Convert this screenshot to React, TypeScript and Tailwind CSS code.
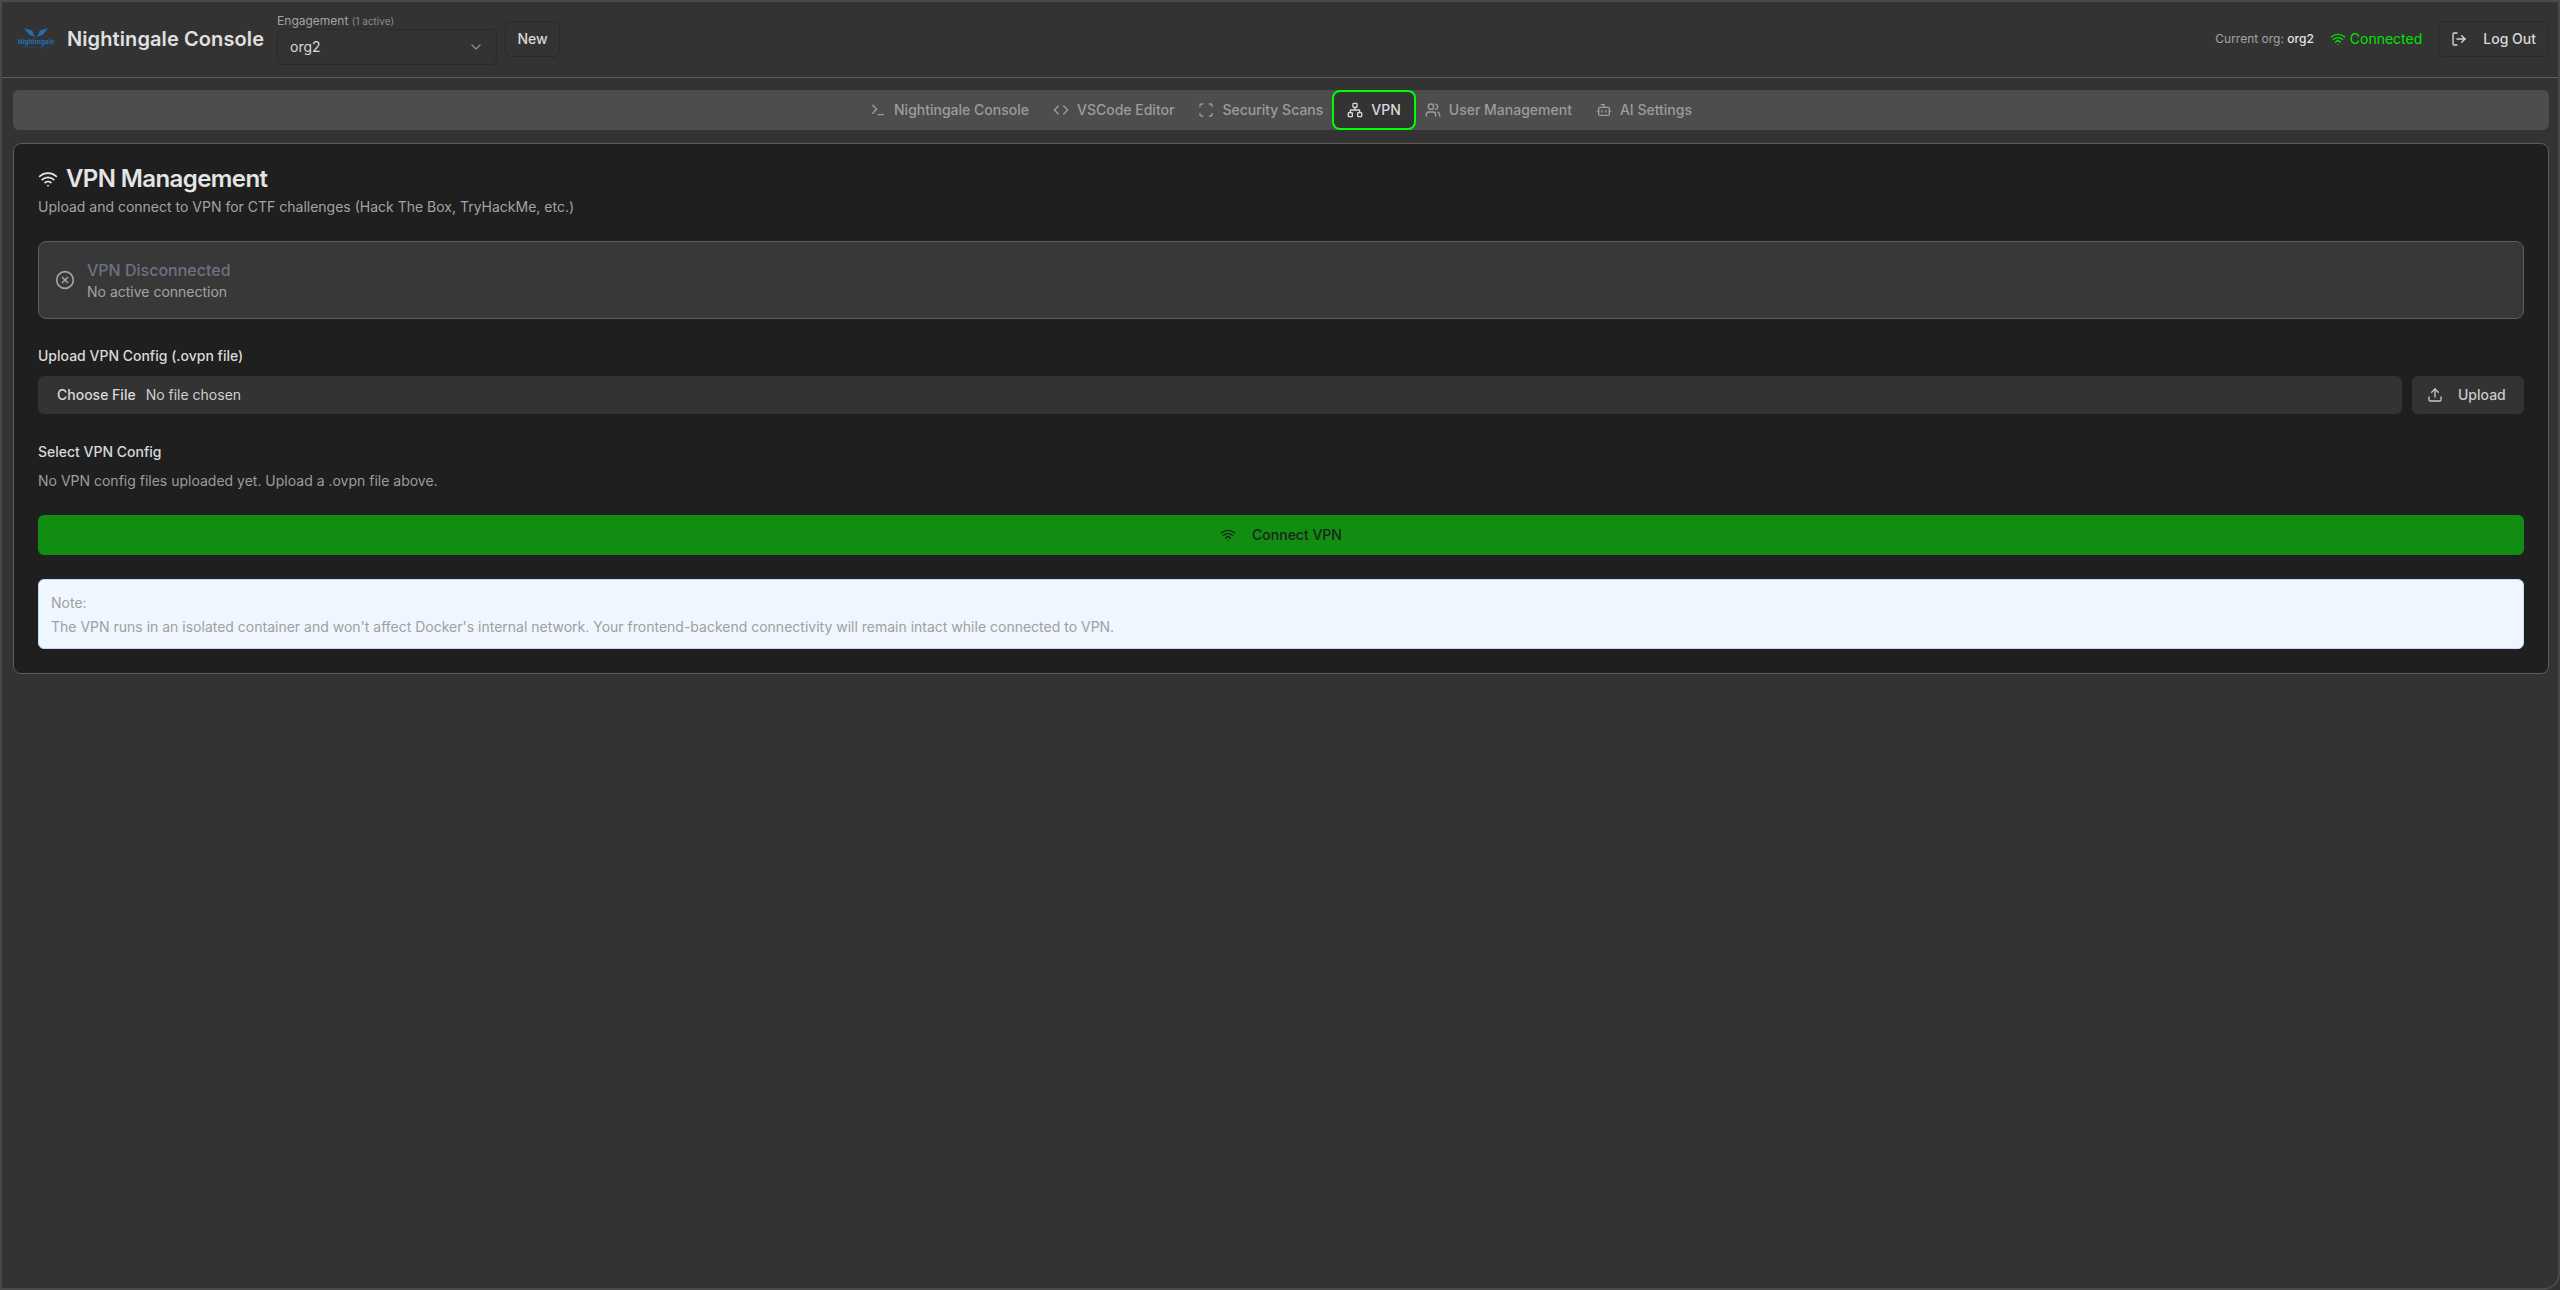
import React from 'react';
import { Terminal, Code, Scan, Network, Users, Bot, ChevronDown, Wifi, LogOut, CircleX, Upload } from 'lucide-react';

const tabs = [
  { label: 'Nightingale Console', icon: Terminal },
  { label: 'VSCode Editor', icon: Code },
  { label: 'Security Scans', icon: Scan },
  { label: 'VPN', icon: Network, active: true },
  { label: 'User Management', icon: Users },
  { label: 'AI Settings', icon: Bot },
];

function Logo() {
  return (
    <div className="flex w-[40px] flex-col items-center">
      <svg width="24" height="9" viewBox="0 0 24 9">
        <path d="M0 0 L8 2.5 L11 9 L5 6.5 Z" fill="#1f6fb5" />
        <path d="M24 0 L16 2.5 L13 9 L19 6.5 Z" fill="#1f6fb5" />
      </svg>
      <span className="mt-[1px] text-[6.5px] font-bold leading-[8px] text-[#1f6fb5]">Nightingale</span>
      <span className="text-[2.5px] leading-[3px] text-[#1f4f7f]">cyber security platform</span>
    </div>
  );
}

export default function App() {
  return (
    <div className="bg-[#333333]">
      <div className="min-h-screen rounded-br-[16px] border-2 border-[#4a4a4a] bg-[#333333] font-['Inter',sans-serif] text-sm text-[#e5e5e5]">
        {/* header */}
        <header className="flex h-[76px] items-center justify-between border-b border-[#5c5c5c] pb-[2px] pl-[14px] pr-[9px]">
          <div className="flex items-center">
            <Logo />
            <h1 className="ml-[11px] text-xl font-semibold tracking-[0.1px] text-[#e0e0e0]">Nightingale Console</h1>
            <div className="ml-[13px] flex flex-col">
              <div className="h-4 text-xs leading-4 text-[#a3a3a3]">
                Engagement <span className="text-[10px] text-[#8a8a8a]">(1 active)</span>
              </div>
              <div className="flex h-9 w-[220px] items-center justify-between rounded-md border border-[#292929] bg-[#333333] px-3 text-[#d9d9d9]">
                org2
                <ChevronDown size={16} className="text-[#8a8a8a]" />
              </div>
            </div>
            <button className="ml-2 h-9 w-[55px] rounded-md border border-[#292929] font-medium text-[#d9d9d9]">New</button>
          </div>
          <div className="flex items-center">
            <span className="text-xs text-[#a3a3a3]">
              Current org: <span className="font-medium text-[#e5e5e5]">org2</span>
            </span>
            <span className="ml-[16px] flex items-center gap-1 text-sm text-[#00e600]">
              <Wifi size={16} className="text-[#00e600]" />
              Connected
            </span>
            <button className="ml-4 flex h-9 items-center gap-4 rounded-md border border-[#292929] px-3 font-medium text-[#d9d9d9]">
              <LogOut size={16} />
              Log Out
            </button>
          </div>
        </header>

        <main className="pl-[11px] pr-[9px] pt-3">
          {/* tabs */}
          <nav className="flex h-10 items-center justify-center rounded-md bg-[#4d4d4d]">
            {tabs.map((t) => (
              <button
                key={t.label}
                className={
                  t.active
                    ? '-mx-px flex h-9 items-center gap-2 rounded-md bg-[#333333] px-[13px] font-medium text-[#d9d9d9] ring-2 ring-[#00ff00]'
                    : 'flex h-9 items-center gap-2 rounded-md px-3 font-medium text-[#9c9c9c]'
                }
              >
                <t.icon size={16} />
                {t.label}
              </button>
            ))}
          </nav>

          {/* vpn panel */}
          <section className="mt-[13px] rounded-lg border border-[#5c5c5c] bg-[#1f1f1f] p-6 pt-[19px]">
            <h2 className="flex h-8 items-center gap-2 text-2xl font-semibold tracking-tight text-[#e5e5e5]">
              <Wifi size={20} />
              VPN Management
            </h2>
            <p className="mt-[2px] h-5 text-sm text-[#a3a3a3]">Upload and connect to VPN for CTF challenges (Hack The Box, TryHackMe, etc.)</p>

            <div className="mt-6 flex h-[78px] items-center gap-3 rounded-lg border border-[#5c5c5c] bg-[#383838] px-4">
              <CircleX size={20} className="text-[#a3a3a3]" />
              <div>
                <div className="text-base font-medium leading-6 text-[#6b7280]">VPN Disconnected</div>
                <div className="text-sm leading-5 text-[#a3a3a3]">No active connection</div>
              </div>
            </div>

            <label className="mt-[27px] block text-sm font-medium leading-5 text-[#d9d9d9]">Upload VPN Config (.ovpn file)</label>
            <div className="mt-[10px] flex gap-[10px]">
              <div className="flex h-[38px] flex-1 items-center rounded-md bg-[#333333] px-[19px]">
                <span className="font-medium text-[#d9d9d9]">Choose File</span>
                <span className="ml-[10px] text-[#cfcfcf]">No file chosen</span>
              </div>
              <button className="flex h-[38px] w-[112px] items-center gap-[15px] rounded-md bg-[#333333] pl-[15px] font-medium text-[#c8c8c8]">
                <Upload size={16} />
                Upload
              </button>
            </div>

            <label className="mt-[28px] block text-sm font-medium leading-5 text-[#d9d9d9]">Select VPN Config</label>
            <p className="mt-[9px] text-sm leading-5 text-[#9c9c9c]">No VPN config files uploaded yet. Upload a .ovpn file above.</p>

            <button className="mt-6 flex h-10 w-full items-center justify-center gap-4 rounded-md bg-[#118e11] font-medium text-[#1f1f1f]">
              <Wifi size={16} />
              Connect VPN
            </button>

            <div className="mt-6 h-[70px] rounded-md border border-[#bfdbfe] bg-[#eff6ff] px-3 py-[11px] text-sm leading-6 text-[#a0a0a0]">
              <p>Note:</p>
              <p>The VPN runs in an isolated container and won't affect Docker's internal network. Your frontend-backend connectivity will remain intact while connected to VPN.</p>
            </div>
          </section>
        </main>
      </div>
    </div>
  );
}
